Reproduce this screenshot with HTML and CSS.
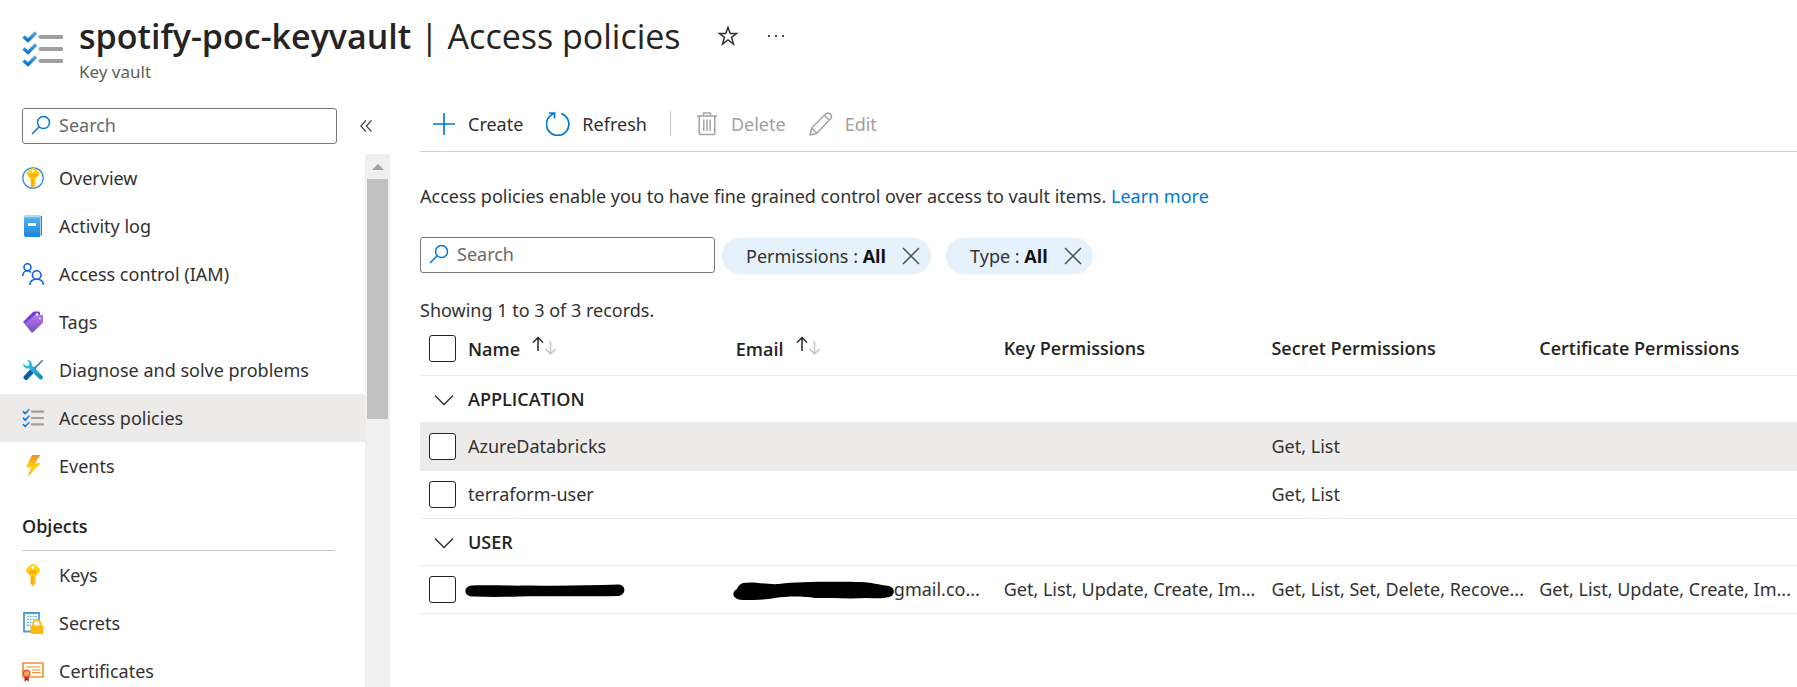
FILE: index.html
```html
<!DOCTYPE html>
<html lang="en">
<head>
<meta charset="utf-8">
<meta name="viewport" content="width=device-width, initial-scale=1">
<title>spotify-poc-keyvault | Access policies</title>
<link rel="stylesheet" href="styles.css">
</head>
<body>
<svg class="defs" aria-hidden="true">
  <defs>
    <linearGradient id="blue" x1="0" y1="0" x2="0" y2="1"><stop offset="0" stop-color="#5ea0ef"/><stop offset="1" stop-color="#0078d4"/></linearGradient>
    <linearGradient id="book" x1="0" y1="0" x2="0" y2="1"><stop offset="0" stop-color="#50b0f0"/><stop offset="1" stop-color="#1b85d8"/></linearGradient>
    <linearGradient id="gold" x1="0" y1="0" x2="0" y2="1"><stop offset="0" stop-color="#ffd70f"/><stop offset="1" stop-color="#fdb515"/></linearGradient>
    <linearGradient id="bolt" x1="0" y1="0" x2="0" y2="1"><stop offset="0" stop-color="#f78d1e"/><stop offset=".6" stop-color="#fed70f"/><stop offset="1" stop-color="#f78d1e"/></linearGradient>
    <linearGradient id="tag" x1="0" y1="0" x2="0" y2="1"><stop offset="0" stop-color="#b77af4"/><stop offset="1" stop-color="#7450b5"/></linearGradient>
    <linearGradient id="wrench" x1="0" y1="0" x2="1" y2="1"><stop offset="0" stop-color="#32d4f5"/><stop offset="1" stop-color="#198ab3"/></linearGradient>
    <symbol id="i-list" viewBox="0 0 41 36">
      <path d="M18.500 6h21M18.500 18h21M18.500 30h21" stroke="#a0a0a0" stroke-width="4" stroke-linecap="round"/>
      <g fill="none" stroke="url(#blue)" stroke-width="3.400"><path d="M1.500 5.500l4.500 4L14 1.500"/><path d="M1.500 17.500l4.500 4 8-8"/><path d="M1.500 29.500l4.500 4 8-8"/></g>
    </symbol>
    <symbol id="i-search" viewBox="0 0 20 20"><g fill="none" stroke="#0078d4" stroke-width="1.500"><circle cx="12.500" cy="7.500" r="6"/><path d="M8.200 11.800L1 19"/></g></symbol>
    <symbol id="i-key" viewBox="0 0 22 22">
      <path d="M11 0c1.500 0 2.500.6 3.500 1.600l2.500 2.600c1.400 1.400 1.400 2.900 0 4.300L13.500 12v7.500L11 22l-2.500-2.500V12L5 8.500c-1.400-1.400-1.400-2.900 0-4.300l2.500-2.600C8.500.6 9.500 0 11 0z" fill="url(#gold)"/>
      <circle cx="11" cy="3.300" r="1.500" fill="#fff"/><path d="M7.500 7.300h7M7.500 8.800h7" stroke="#f59b00" stroke-width="1"/><path d="M10 12v8" stroke="#f59b00"/>
    </symbol>
    <symbol id="i-close" viewBox="0 0 18 18"><path d="M1 1l16 16M17 1L1 17" stroke="#505050" stroke-width="1.500" fill="none"/></symbol>
    <symbol id="i-sort" viewBox="0 0 24 20">
      <path d="M6 15V1.500M1 6.500l5-5 5 5" fill="none" stroke="#252423" stroke-width="1.500"/>
      <path d="M18.500 5v13M13.500 13l5 5 5-5" fill="none" stroke="#c4c4c4" stroke-width="1.500"/>
    </symbol>
    <symbol id="i-chevron" viewBox="0 0 20 12"><path d="M1 1.500l9 9 9-9" fill="none" stroke="#323130" stroke-width="1.500"/></symbol>
  </defs>
</svg>

<header class="header">
  <svg class="header-icon" aria-hidden="true"><use href="#i-list"/></svg>
  <div>
    <div class="title-row">
      <h1 class="title"><b>spotify-poc-keyvault</b> | Access policies</h1>
      <button class="plain star" aria-label="Add to favorites"><svg width="22" height="22" viewBox="0 0 22 22"><path d="M11 2.500l2.300 6.100h6.200l-5 3.800 2 6.600L11 15l-5.500 4 2-6.600-5-3.800h6.200z" fill="none" stroke="#323130" stroke-width="1.500"/></svg></button>
      <button class="plain" aria-label="More actions"><svg width="18" height="4" viewBox="0 0 18 4"><path d="M1 1h2v2H1zM8 1h2v2H8zM15 1h2v2h-2z" fill="#484644"/></svg></button>
    </div>
    <p class="subtitle">Key vault</p>
  </div>
</header>

<div class="body">
  <aside class="side">
    <div class="side-search">
      <label class="search"><svg aria-hidden="true"><use href="#i-search"/></svg><input type="text" placeholder="Search" aria-label="Search menu"></label>
      <button class="plain" aria-label="Collapse menu"><svg width="12" height="12" viewBox="0 0 12 12"><path d="M6 .5L.8 6 6 11.500M11.500.5L6.300 6l5.200 5.500" fill="none" stroke="#484644" stroke-width="1.200"/></svg></button>
    </div>
    <div class="side-scroll">
      <nav class="menu">
        <a class="item" href="#"><svg viewBox="0 0 22 22"><circle cx="11" cy="11" r="10.200" fill="#fff" stroke="#2b88d8" stroke-width="1.200"/><use href="#i-key" x="1" y="1" width="20" height="20"/></svg>Overview</a>
        <a class="item" href="#"><svg viewBox="0 0 22 22"><path d="M3 0h15.500L20 1.500V20h-2V3H2V1.500z" fill="#b5d5ea"/><path d="M18.500 2l1-.5V20h-1.200" fill="none" stroke="#2a7fb8"/><path d="M2 2.500h16V22H4c-1.200 0-2-.8-2-2z" fill="url(#book)"/><path d="M6 8h8v3H6z" fill="#fff"/></svg>Activity log</a>
        <a class="item" href="#"><svg viewBox="0 0 22 22"><g fill="none" stroke="#0f62e0" stroke-width="1.600"><circle cx="5.500" cy="4.200" r="3.500"/><path d="M.8 13c0-3 2-5.200 4.700-5.200 1.500 0 2.800.7 3.600 1.800"/><circle cx="14.700" cy="12" r="4.300"/><path d="M7.800 22c.2-3.600 3-5.700 6.900-5.700s6.500 2.100 6.800 5.700"/></g></svg>Access control (IAM)</a>
        <a class="item" href="#"><svg viewBox="0 0 22 22"><path d="M1 11L10.500 1.500c.6-.6 1.200-.9 2-.9H17l1 1v4L5 15z" fill="#773adc"/><path d="M3.500 14c-.6-.6-.6-1.300 0-1.900L12 4.500c.5-.5 1-.7 1.700-.7H20c.7 0 1 .4 1 1v6c0 .7-.3 1.200-.8 1.700L11 21.300c-.6.6-1 .6-1.600 0z" fill="url(#tag)"/><circle cx="15" cy="3.500" r="1.300" fill="#fff"/><circle cx="18" cy="7.500" r="1.500" fill="#fff" stroke="#773adc" stroke-width=".7"/></svg>Tags</a>
        <a class="item" href="#"><svg viewBox="0 0 22 22"><path d="M20.800 1.200L12 10" stroke="#2c80a8" stroke-width="1.600"/><path d="M11.500 10.500L4 18.500" stroke="#0a62a8" stroke-width="5" stroke-linecap="round"/><path d="M5 1c3-.6 5.500 2 4.700 5l10.700 11c1.700 2-1 4.800-3 3L6.600 9.300C3.500 10.200.6 7.500 1.200 4.300L4 7l2.800-.5.500-2.700z" fill="url(#wrench)"/></svg>Diagnose and solve problems</a>
        <a class="item selected" href="#" aria-current="page"><svg><use href="#i-list"/></svg>Access policies</a>
        <a class="item" href="#"><svg viewBox="0 0 22 22"><path d="M10 0h8.500L13 8.200h5.500L5.500 22 9 12.500H4z" fill="url(#bolt)"/></svg>Events</a>
        <h2 class="group">Objects</h2>
        <a class="item" href="#"><svg><use href="#i-key"/></svg>Keys</a>
        <a class="item" href="#"><svg viewBox="0 0 22 22"><path d="M2 1h15v18.500H2z" fill="#fff" stroke="#4a9fd0" stroke-width="1.800"/><path d="M5 4.500h10M5 7.500h10M5 10.500h9M5 13.300h4" stroke="#6fb8e2" stroke-width="1.700" stroke-dasharray="1.800 1"/><path d="M11.300 14v-2.300a3.600 3.600 0 017.200 0V14" fill="#fff" stroke="#fdb913" stroke-width="2"/><rect x="8.500" y="13.500" width="13" height="8.500" rx="1" fill="#fdb913"/></svg>Secrets</a>
        <a class="item" href="#"><svg viewBox="0 0 22 22"><path d="M1 3h20v14H1z" fill="#fff" stroke="#ee9430" stroke-width="1.700"/><path d="M4.500 7h14M10 10h8.500M10 12.700h8.500" stroke="#ee9430" stroke-width="1.200"/><path d="M2.500 15h4.200v6.700l-2.100-1.700-2.100 1.700z" fill="#b01e1e"/><circle cx="4.600" cy="13.500" r="3.200" fill="#fba95a" stroke="#e8503a" stroke-width="1.400"/></svg>Certificates</a>
      </nav>
      <div class="scrollbar" aria-hidden="true"><span class="arrow"></span><span class="thumb"></span></div>
    </div>
  </aside>

  <main class="main">
    <div class="toolbar">
      <button class="tool"><svg viewBox="0 0 24 24"><path d="M12 1v22M1 12h22" stroke="#0078d4" stroke-width="1.700"/></svg>Create</button>
      <button class="tool"><svg viewBox="0 0 24 24"><path d="M15.300 1.600A11.200 11.200 0 1 1 7.500 1.800M3 1h5.500v5.500" fill="none" stroke="#0078d4" stroke-width="1.700"/></svg>Refresh</button>
      <span class="divider"></span>
      <button class="tool" disabled><svg viewBox="0 0 24 24"><g fill="none" stroke="#a6a4a2" stroke-width="1.500"><path d="M2 4h20M4.200 4v17.500c0 .7.400 1 1 1h13.600c.6 0 1-.3 1-1V4M8.500 4V1h7v3"/><path d="M8.800 7.500v11.500M12 7.500v11.500M15.200 7.500v11.500"/></g></svg>Delete</button>
      <button class="tool" disabled><svg viewBox="0 0 24 24"><g fill="none" stroke="#a6a4a2" stroke-width="1.500" stroke-linejoin="round"><path d="M1 23l1.800-7L17 1.800c2.500-2.300 7 1.700 4.800 4.700L7.800 21.200z"/><path d="M15.500 3.500l5 5M2.800 16l5 5.200"/></g></svg>Edit</button>
    </div>
    <p class="intro">Access policies enable you to have fine grained control over access to vault items. <a href="#">Learn more</a></p>
    <div class="filters">
      <label class="search"><svg aria-hidden="true"><use href="#i-search"/></svg><input type="text" placeholder="Search" aria-label="Search policies"></label>
      <div class="pills">
        <span class="pill"><span>Permissions : <b>All</b></span><button class="plain" aria-label="Remove permissions filter"><svg><use href="#i-close"/></svg></button></span>
        <span class="pill"><span>Type : <b>All</b></span><button class="plain" aria-label="Remove type filter"><svg><use href="#i-close"/></svg></button></span>
      </div>
    </div>
    <p class="count">Showing 1 to 3 of 3 records.</p>
    <table class="grid">
      <colgroup><col class="c-check"><col class="c-data"><col class="c-data"><col class="c-data"><col class="c-data"><col></colgroup>
      <thead>
        <tr><th><input type="checkbox" aria-label="Select all"></th><th>Name<svg class="sort"><use href="#i-sort"/></svg></th><th>Email<svg class="sort"><use href="#i-sort"/></svg></th><th>Key Permissions</th><th>Secret Permissions</th><th>Certificate Permissions</th></tr>
      </thead>
      <tbody>
        <tr class="section"><td><button class="plain" aria-label="Collapse APPLICATION"><svg class="chevron"><use href="#i-chevron"/></svg></button></td><th colspan="5">APPLICATION</th></tr>
        <tr class="hover"><td><input type="checkbox" aria-label="Select AzureDatabricks"></td><td>AzureDatabricks</td><td></td><td></td><td>Get, List</td><td></td></tr>
        <tr><td><input type="checkbox" aria-label="Select terraform-user"></td><td>terraform-user</td><td></td><td></td><td>Get, List</td><td></td></tr>
        <tr class="section"><td><button class="plain" aria-label="Collapse USER"><svg class="chevron"><use href="#i-chevron"/></svg></button></td><th colspan="5">USER</th></tr>
        <tr><td><input type="checkbox" aria-label="Select user"></td>
          <td><svg class="mark" width="160" height="14" viewBox="0 0 160 14"><path d="M7 1.500C25 1 45 2 65 1.500c30 .5 60 0 88-1 9 0 8 11 0 11.500-35 .5-70 0-100 .5-16 .5-30 .5-45 0C-2 12.500-2 2 7 1.500z"/></svg></td>
          <td><svg class="mark" width="161" height="20" viewBox="0 0 161 20"><path d="M10 2c10-2 24 2 36 1C70 0 110 1 128 1c9 0 19 3 28 4 7 2 6 10 0 11-8 2-14 1-22 1-16 1-34 0-52 0-12-2-28-2-40 0-10 2-22 2-32 2C-1 19-2 11 4 8c1-3 3-5 6-6z"/></svg>gmail.co...</td>
          <td>Get, List, Update, Create, Im...</td><td>Get, List, Set, Delete, Recove...</td><td>Get, List, Update, Create, Im...</td></tr>
      </tbody>
    </table>
  </main>
</div>
</body>
</html>
```
FILE: styles.css
```css
* { box-sizing: border-box; }

body {
  margin: 0;
  height: 100vh;
  display: flex;
  flex-direction: column;
  overflow: hidden;
  background: #fff;
  color: #323130;
  font-family: "Noto Sans", "Open Sans", sans-serif;
  font-size: 18px;
  line-height: 24px;
}

h1, h2, p { margin: 0; }
a { color: #0078d4; text-decoration: none; }
button, input { font: inherit; color: inherit; }
.defs { position: absolute; width: 0; height: 0; }

.plain {
  display: inline-flex;
  padding: 0;
  border: 0;
  background: none;
}

.header {
  display: flex;
  gap: 16px;
  height: 98px;
  padding: 12px 22px 0;
}
.header-icon { width: 41px; height: 36px; margin-top: 19px; }
.title-row { display: flex; align-items: center; }
.title {
  font-family: "Open Sans", "Noto Sans", sans-serif;
  font-size: 34px;
  line-height: 48px;
  font-weight: 400;
  color: #252423;
  white-space: nowrap;
}
.title b { font-weight: 600; }
.star { margin: 0 28px 0 36px; }
.subtitle { font-size: 17px; color: #605e5c; }

.body { display: flex; flex: 1; min-height: 0; }

.side {
  display: flex;
  flex-direction: column;
  flex: 0 0 390px;
}
.side-search {
  display: flex;
  align-items: center;
  gap: 23px;
  height: 56px;
  padding-left: 22px;
}
.side-search .search { width: 315px; }
.search {
  display: flex;
  align-items: center;
  gap: 8px;
  height: 36px;
  padding: 0 8px 2px;
  border: 1px solid #7a7876;
  border-radius: 3px;
}
.search svg { width: 20px; height: 20px; flex: none; }
.search input {
  flex: 1;
  min-width: 0;
  padding: 0;
  border: 0;
  outline: 0;
  background: none;
}
.search input::placeholder { color: #6b6967; opacity: 1; }

.side-scroll { display: flex; flex: 1; min-height: 0; overflow: hidden; }
.menu { flex: 1; min-width: 0; }
.item {
  display: flex;
  align-items: center;
  gap: 15px;
  height: 48px;
  padding-left: 22px;
  color: #323130;
}
.item svg { width: 22px; height: 22px; }
.item.selected { background: #edebe9; }
.group {
  height: 61px;
  margin: 0 30px 0 22px;
  padding-top: 24px;
  border-bottom: 1px solid #c8c6c4;
  font-family: "Open Sans", "Noto Sans", sans-serif;
  font-size: 18px;
  font-weight: 600;
  color: #252423;
}
.scrollbar {
  display: flex;
  flex-direction: column;
  align-items: center;
  width: 25px;
  background: #f0f0f0;
}
.arrow {
  margin: 10px 0 9px;
  border: 6px solid transparent;
  border-top: 0;
  border-bottom-color: #a3a3a3;
}
.thumb { width: 21px; height: 240px; background: #c1c1c1; }

.main { flex: 1; min-width: 0; padding-left: 30px; }

.toolbar {
  display: flex;
  align-items: center;
  height: 54px;
  padding: 0 0 2px 12px;
  border-bottom: 1px solid #d2d0ce;
}
.tool {
  display: flex;
  align-items: center;
  gap: 12px;
  margin-right: 23px;
  padding: 0;
  border: 0;
  background: none;
}
.tool svg { width: 24px; height: 24px; }
.tool:disabled { color: #a19f9d; }
.divider { width: 1px; height: 25px; margin-right: 24px; background: #c8c6c4; }

.intro { margin-top: 32px; }

.filters { display: flex; gap: 7px; margin-top: 29px; }
.filters .search { width: 295px; }
.pills { display: flex; gap: 15px; padding-top: 1px; }
.pill {
  display: flex;
  align-items: center;
  gap: 16px;
  height: 36px;
  padding: 0 11px 0 24px;
  border-radius: 18px;
  background: #e5f1fb;
}
.pill b { font-family: "Open Sans", "Noto Sans", sans-serif; color: #111; }
.pill svg { width: 18px; height: 18px; }

.count { margin-top: 24px; }

.grid {
  width: 100%;
  table-layout: fixed;
  border-collapse: collapse;
  text-align: left;
}
.c-check { width: 48px; }
.c-data { width: 19.45%; }
.grid th, .grid td {
  height: 48px;
  padding: 0;
  border-bottom: 1px solid #edebe9;
  white-space: nowrap;
}
.grid th {
  font-family: "Open Sans", "Noto Sans", sans-serif;
  font-weight: 600;
  color: #252423;
}
.grid thead th { height: 53px; }
.grid .section th, .grid .section td { height: 47px; }
.grid .hover { background: #edebe9; }
.grid input {
  display: block;
  appearance: none;
  width: 27px;
  height: 27px;
  margin: 0 0 0 9px;
  border: 1px solid #252423;
  border-radius: 3px;
  background: #fff;
}
.sort { width: 24px; height: 20px; margin-left: 12px; }
.chevron { width: 20px; height: 12px; margin-left: 14px; }
.mark { margin-left: -3px; vertical-align: middle; }
```
